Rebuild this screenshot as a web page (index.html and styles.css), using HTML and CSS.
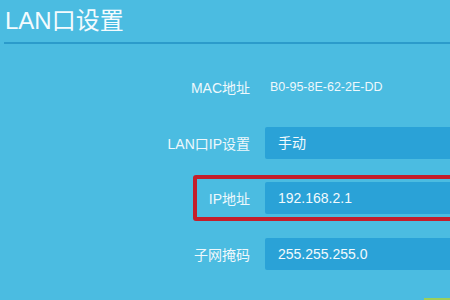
FILE: index.html
```html
<!DOCTYPE html>
<html lang="zh">
<head>
<meta charset="utf-8">
<link rel="stylesheet" href="styles.css">
</head>
<body>
<div class="page">
  <div class="header"><h1 class="title">LAN口设置</h1></div>
  <div class="form">
    <div class="row">
      <div class="label">MAC地址</div>
      <div class="value">B0-95-8E-62-2E-DD</div>
    </div>
    <div class="row">
      <div class="label">LAN口IP设置</div>
      <div class="input">手动</div>
    </div>
    <div class="row highlighted">
      <div class="label">IP地址</div>
      <div class="input">192.168.2.1</div>
      <div class="mark"></div>
    </div>
    <div class="row">
      <div class="label">子网掩码</div>
      <div class="input">255.255.255.0</div>
    </div>
  </div>
  <div class="corner"></div>
</div>
</body>
</html>
```
FILE: styles.css
```css
html, body {
  margin: 0;
  padding: 0;
}
body {
  width: 450px;
  height: 300px;
  overflow: hidden;
  background: #4bbce1;
  font-family: "Liberation Sans", "Noto Sans CJK SC", sans-serif;
  color: #ffffff;
}
.page {
  position: relative;
  width: 450px;
  height: 300px;
}
.header {
  margin-left: 4px;
  height: 42px;
  border-bottom: 2px solid #2b9bcb;
}
.title {
  margin: 0;
  padding: 7px 0 0 1px;
  font-size: 24px;
  font-weight: normal;
  line-height: 28px;
  color: #f4fbfe;
}
.form {
  padding-top: 27px;
  display: flex;
  flex-direction: column;
  gap: 23.6px;
}
.row {
  position: relative;
  display: grid;
  grid-template-columns: 250px 1fr;
  column-gap: 15px;
  height: 32px;
  align-items: center;
}
.label {
  text-align: right;
  font-size: 14px;
  color: #eef8fc;
}
.value {
  padding-left: 5px;
  font-size: 12.5px;
  color: #eef8fc;
}
.input {
  height: 32px;
  line-height: 32px;
  background: #2aa2d7;
  border-radius: 2px 0 0 2px;
  padding-left: 13px;
  font-size: 14px;
  color: #f2fafd;
}
.mark {
  position: absolute;
  left: 193px;
  top: -7px;
  right: -10px;
  bottom: -7px;
  border: 4px solid #c41e2b;
  border-radius: 3px;
}
.corner {
  position: absolute;
  left: 424px;
  bottom: 0;
  width: 26px;
  height: 2px;
  background: #9ccf5a;
}
```
